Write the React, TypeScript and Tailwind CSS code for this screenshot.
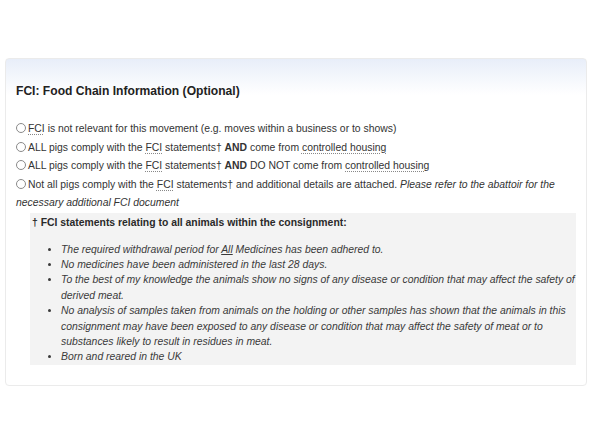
import React from "react";

const options = [
  "irrelevant",
  "comply-housed",
  "comply-not-housed",
  "not-all",
] as const;

function Abbr({ children }: { children: React.ReactNode }) {
  return (
    <abbr className="underline decoration-dotted decoration-[#888] underline-offset-[2px]">
      {children}
    </abbr>
  );
}

function Radio({ value }: { value: string }) {
  return (
    <input
      type="radio"
      name="fci"
      value={value}
      className="m-0 mr-[2px] inline-block h-[10px] w-[10px] appearance-none rounded-full border border-[#8a8a8a] bg-white align-[-1px] checked:border-[3px] checked:border-[#555]"
    />
  );
}

export default function App() {
  return (
    <div
      className="min-h-[444px] w-full bg-white px-[5px] pt-[58px] text-[#333]"
      style={{ fontFamily: '"Liberation Sans", Arial, sans-serif' }}
    >
      <div className="rounded-[4px] border border-[#ebebeb] bg-[linear-gradient(180deg,#e8eef9_0px,#ffffff_36px)] px-[10px] pt-[24px] pb-[20px]">
        <h2 className="text-[12.1px] font-bold leading-[16px] text-[#222]">
          FCI: Food Chain Information (Optional)
        </h2>

        {/* options */}
        <div className="mt-[21px] text-[10.4px] leading-[18.5px]">
          <label className="block">
            <Radio value={options[0]} />
            <Abbr>FCI</Abbr> is not relevant for this movement (e.g. moves within
            a business or to shows)
          </label>
          <label className="block">
            <Radio value={options[1]} />
            ALL pigs comply with the <Abbr>FCI</Abbr> statements† <b>AND</b>{" "}
            come from <Abbr>controlled housing</Abbr>
          </label>
          <label className="block">
            <Radio value={options[2]} />
            ALL pigs comply with the <Abbr>FCI</Abbr> statements† <b>AND</b> DO
            NOT come from <Abbr>controlled housing</Abbr>
          </label>
          <label className="block">
            <Radio value={options[3]} />
            Not all pigs comply with the <Abbr>FCI</Abbr> statements† and
            additional details are attached.{" "}
            <i>
              Please refer to the abattoir for the necessary additional FCI
              document
            </i>
          </label>
        </div>

        {/* statements */}
        <div className="ml-[14px] bg-[#f3f3f3] pt-[2px] pl-[2px]">
          <p className="text-[10.4px] font-bold leading-[16px] text-[#2a2a2a]">
            † FCI statements relating to all animals within the consignment:
          </p>
          <ul className="mt-[11px] list-disc pl-[29px] text-[10.4px] italic leading-[15.4px] text-[#3a3a3a]">
            <li>
              The required withdrawal period for <u>All</u> Medicines has been
              adhered to.
            </li>
            <li>No medicines have been administered in the last 28 days.</li>
            <li>
              To the best of my knowledge the animals show no signs of any
              disease or condition that may affect the safety of derived meat.
            </li>
            <li>
              No analysis of samples taken from animals on the holding or other
              samples has shown that the animals in this consignment may have
              been exposed to any disease or condition that may affect the safety
              of meat or to substances likely to result in residues in meat.
            </li>
            <li>Born and reared in the UK</li>
          </ul>
        </div>
      </div>
    </div>
  );
}
